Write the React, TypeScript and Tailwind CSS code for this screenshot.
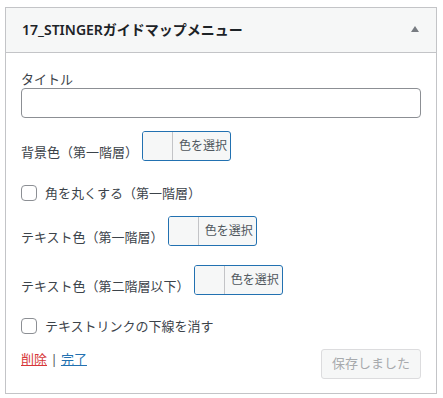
import React from "react";

const font = { fontFamily: '"Noto Sans", "Noto Sans CJK JP", sans-serif' };

function ColorButton() {
  return (
    <div className="flex h-[30px] w-[89px] shrink-0 overflow-hidden rounded-[3px] border border-[#2271b1] bg-[#f6f7f7]">
      <div className="w-[30px] border-r border-[#c3c4c7] bg-[#f6f7f7]" />
      <div className="flex flex-1 items-center pl-[6px] text-[12px] leading-none text-[#50575e]">色を選択</div>
    </div>
  );
}

function Checkbox({ label }: { label: string }) {
  return (
    <div className="flex h-[18px] items-center">
      <div className="h-[16px] w-[16px] rounded-[4px] border border-[#8c8f94] bg-white" />
      <span className="ml-[8px] text-[13px] leading-[18px] text-[#3c434a]">{label}</span>
    </div>
  );
}

export default function App() {
  return (
    <div className="h-[398px] w-[443px] bg-white pt-[7px] pl-[5px]" style={font}>
      <div className="w-[432px] border border-[#c3c4c7] bg-white">
        <div className="flex h-[45px] items-center justify-between border-b border-[#c3c4c7] bg-[#f6f7f7] pl-[16px] pr-[17px]">
          <span className="text-[14px] font-semibold leading-none text-[#1d2327]">17_STINGERガイドマップメニュー</span>
          <svg width="8" height="6" viewBox="0 0 8 6" className="mb-[2px]">
            <polygon points="4,0 8,6 0,6" fill="#787c82" />
          </svg>
        </div>
        <div className="px-[15px] pt-[17px] pb-[14px]">
          <div className="text-[13px] leading-[18px] text-[#3c434a]">タイトル</div>
          <div className="h-[30px] w-[400px] rounded-[4px] border border-[#8c8f94] bg-white" />

          <div className="mt-[13px] flex items-end gap-[4px]">
            <span className="text-[13px] leading-[18px] text-[#3c434a]">背景色（第一階層）</span>
            <ColorButton />
          </div>

          <div className="mt-[23px]">
            <Checkbox label="角を丸くする（第一階層）" />
          </div>

          <div className="mt-[14px] flex items-end gap-[4px]">
            <span className="text-[13px] leading-[18px] text-[#3c434a]">テキスト色（第一階層）</span>
            <ColorButton />
          </div>

          <div className="mt-[19px] flex items-end gap-[4px]">
            <span className="text-[13px] leading-[18px] text-[#3c434a]">テキスト色（第二階層以下）</span>
            <ColorButton />
          </div>

          <div className="mt-[22px]">
            <Checkbox label="テキストリンクの下線を消す" />
          </div>

          <div className="mt-[14px] flex items-start justify-between">
            <div className="mt-[1px] text-[13px] leading-[18px]">
              <span className="text-[#d63638] underline">削除</span>
              <span className="text-[#50575e]"> | </span>
              <span className="text-[#2271b1] underline">完了</span>
            </div>
            <div className="flex h-[30px] w-[100px] items-center justify-center rounded-[3px] border border-[#dcdcde] bg-[#f6f7f7] text-[13px] text-[#a7aaad]">
              保存しました
            </div>
          </div>
        </div>
      </div>
    </div>
  );
}
